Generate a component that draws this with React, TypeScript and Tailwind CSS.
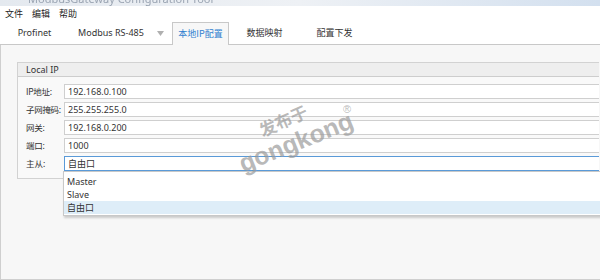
import React from 'react';

const tabs = [
  { label: 'Profinet', w: 'w-[63px]' },
  { label: 'Modbus RS-485', w: 'w-[90px]', caret: true },
  { label: '本地IP配置', w: 'w-[57px]', active: true },
  { label: '数据映射', w: 'w-[71px]' },
  { label: '配置下发', w: 'w-[69px]' },
];

const rows = [
  { label: 'IP地址:', value: '192.168.0.100' },
  { label: '子网掩码:', value: '255.255.255.0' },
  { label: '网关:', value: '192.168.0.200' },
  { label: '端口:', value: '1000' },
];

const App: React.FC = () => {
  return (
    <div className="relative w-[600px] h-[280px] overflow-hidden bg-white flex flex-col text-[9px] text-[#222] font-['Noto_Sans','Noto_Sans_CJK_SC',sans-serif]">
      {/* window title, cut off at the top */}
      <div className="h-[6px] overflow-hidden bg-gradient-to-r from-[#e4e9ef] via-[#eef1f5] to-[#d3e0ef] flex">
        <span className="-mt-[8px] ml-[28px] text-[11px] leading-[14px] text-[#9aa4b2] blur-[0.5px] whitespace-nowrap">ModbusGateway Configuration Tool</span>
      </div>

      {/* menu */}
      <div className="h-[16px] flex items-center gap-[9px] pl-[5px] font-['Noto_Sans_CJK_SC',sans-serif] text-[9px]">
        <span>文件</span>
        <span>编辑</span>
        <span>帮助</span>
      </div>

      {/* tabs */}
      <div className="h-[23px] flex items-end pl-[3px] border-b border-[#c8c8c8]">
        {tabs.map((t) =>
          t.active ? (
            <div
              key={t.label}
              className={`${t.w} h-[23px] -mb-px flex items-center justify-center bg-[#f7f7f7] border border-b-0 border-[#c8c8c8] text-[#2f7fd0] font-['Noto_Sans_CJK_SC',sans-serif]`}
            >
              {t.label}
            </div>
          ) : (
            <React.Fragment key={t.label}>
              <div className={`${t.w} h-[22px] flex items-center justify-center font-['Noto_Sans','Noto_Sans_CJK_SC',sans-serif]`}>
                <span className="text-[#333]">{t.label}</span>
              </div>
              {t.caret && (
                <div className="w-[16px] h-[22px] flex items-center pl-[1px]">
                  <svg width="7" height="5" viewBox="0 0 7 5">
                    <path d="M0 0 L7 0 L3.5 5 Z" fill="#b0b0b0" />
                  </svg>
                </div>
              )}
            </React.Fragment>
          )
        )}
      </div>

      {/* content panel */}
      <div className="flex-1 bg-[#f7f7f7] border-l border-b border-[#cfcfcf] pl-[16px] pt-[17px] pr-[1px]">
        <div className="border border-r-0 border-[#d2d2d2] bg-[#f9f9f9]">
          <div className="h-[14px] bg-[#eeeeee] border-b border-[#cdcdcd] flex items-center pl-[8px] text-[#333]">Local IP</div>
          <div className="pl-[8px] pt-[7px] pb-[7px] flex flex-col gap-[3px]">
            {rows.map((r) => (
              <div key={r.label} className="flex items-center h-[15px]">
                <span className="w-[38px] font-['Noto_Sans_CJK_SC',sans-serif] text-[8.5px] tracking-[-0.3px] whitespace-nowrap text-[#333]">{r.label}</span>
                <div className="flex-1 h-[15px] bg-white border border-r-0 border-[#cfcfcf] flex items-center pl-[3px] text-[#333]">
                  {r.value}
                </div>
              </div>
            ))}
            <div className="flex items-center h-[15px]">
              <span className="w-[38px] font-['Noto_Sans_CJK_SC',sans-serif] text-[8.5px] text-[#333]">主从:</span>
              <div className="flex-1 h-[15px] bg-white border border-r-0 border-[#5a9ad8] flex items-center pl-[3px] font-['Noto_Sans_CJK_SC',sans-serif] text-[#333]">
                自由口
              </div>
            </div>
          </div>
        </div>
      </div>

      {/* open combo list */}
      <div className="absolute left-[63px] top-[171px] w-[540px] bg-white border border-[#c8c8c8] shadow-[1px_2px_2px_rgba(0,0,0,0.18)] flex flex-col pt-[3px] pb-[1px] text-[#333]">
        <div className="h-[13px] flex items-center pl-[3px]">Master</div>
        <div className="h-[13px] flex items-center pl-[3px]">Slave</div>
        <div className="h-[13px] flex items-center pl-[3px] bg-[#deedf8] font-['Noto_Sans_CJK_SC',sans-serif]">自由口</div>
      </div>

      {/* watermark */}
      <div className="absolute left-[283px] top-[120px] -translate-x-1/2 -translate-y-1/2 rotate-[-24deg] pointer-events-none select-none text-[17px] font-bold leading-none whitespace-nowrap text-[#9a9a9a]/70 font-['Noto_Sans_CJK_SC',sans-serif]">
        发布于
      </div>
      <div className="absolute left-[296px] top-[142px] -translate-x-1/2 -translate-y-1/2 rotate-[-22deg] pointer-events-none select-none text-[25px] font-bold leading-none whitespace-nowrap text-[#9a9a9a]/70 font-['Liberation_Sans',sans-serif]">
        gongkong
      </div>
      <div className="absolute left-[343px] top-[104px] text-[11px] leading-none text-[#9a9a9a]/70 font-['Liberation_Sans',sans-serif]">®</div>
    </div>
  );
};

export default App;
